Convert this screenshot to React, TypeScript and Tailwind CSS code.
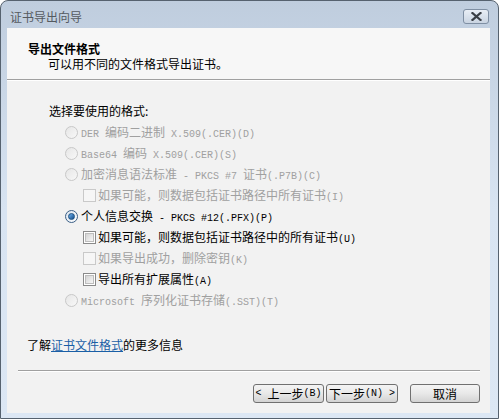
import React from "react";

const Mixed = ({ t }: { t: string }) => (
  <>
    {t.split(/([\x20-\x7e]+)/).map((s, i) =>
      /^[\x20-\x7e]+$/.test(s) ? (
        <span key={i} className="font-['Liberation_Mono',monospace] text-[10px]">
          {s}
        </span>
      ) : (
        <span key={i}>{s}</span>
      )
    )}
  </>
);

const Radio = ({ checked, disabled }: { checked?: boolean; disabled?: boolean }) =>
  disabled ? (
    <span className="w-[13px] h-[13px] rounded-full border border-[#c8c8c8] bg-gradient-to-br from-[#e6e6e6] to-[#f8f8f8] shrink-0" />
  ) : (
    <span className="w-[13px] h-[13px] rounded-full border border-[#3b5f86] bg-gradient-to-br from-[#d9e3ee] to-[#ffffff] shrink-0 flex items-center justify-center">
      {checked && (
        <span className="w-[7px] h-[7px] rounded-full bg-gradient-to-br from-[#6fb3f0] to-[#0f4c8a] border border-[#1b4f80]" />
      )}
    </span>
  );

const Check = ({ disabled }: { disabled?: boolean }) =>
  disabled ? (
    <span className="w-[13px] h-[13px] border border-[#c9c9c9] bg-[#f6f6f6] shrink-0" />
  ) : (
    <span className="w-[13px] h-[13px] border border-[#8a8a8a] bg-white shrink-0 p-[1px]">
      <span className="block w-full h-full bg-gradient-to-br from-[#d4d4d4] to-[#f7f7f7] border border-[#bdbdbd]" />
    </span>
  );

const Btn = ({ children, w }: { children: React.ReactNode; w: string }) => (
  <div
    className={`${w} h-[19px] rounded-[3px] border border-[#707070] bg-gradient-to-b from-[#f4f4f4] via-[#e8e8e8] to-[#d3d3d3] flex items-center justify-center text-[12px] leading-[14px] text-black whitespace-pre`}
  >
    {children}
  </div>
);

export default function App() {
  return (
    <div className="w-[499px] h-[419px] bg-white font-['Noto_Sans_CJK_SC',sans-serif] text-[12px]">
      <div className="h-full flex flex-col rounded-t-[8px] border border-[#56626f] bg-gradient-to-b from-[#bfcdde] via-[#d8e4f2] to-[#dce7f4] overflow-hidden">
        {/* title bar */}
        <div className="h-[27px] shrink-0 flex items-start justify-between pt-[8px] pl-[9px] pr-[9px]">
          <div className="h-[16px] leading-[16px] text-[12px] text-[#555a60]">证书导出向导</div>
          <div className="w-[26px] h-[15px] rounded-[3px] border border-[#7f8fa3] bg-gradient-to-b from-[#e9eef5] to-[#c9d4e2] flex items-center justify-center">
            <svg width="11" height="9" viewBox="0 0 11 9">
              <path d="M1.5 1 L9.5 8 M9.5 1 L1.5 8" stroke="#3a3f46" strokeWidth="2.2" strokeLinecap="square" />
            </svg>
          </div>
        </div>

        {/* client area */}
        <div className="flex-1 ml-[6px] mr-[8px] mb-[5px] flex flex-col bg-[#f2f2f2]">
          {/* header */}
          <div className="h-[51px] shrink-0 bg-[#f7f7f7] pl-[21px] pt-[13px] text-black">
            <div className="h-[15px] leading-[15px] font-bold">导出文件格式</div>
            <div className="h-[15px] leading-[15px] pl-[20px]">可以用不同的文件格式导出证书。</div>
          </div>
          <div className="h-px bg-[#a0a0a0] shrink-0" />
          <div className="h-px bg-white shrink-0" />

          {/* body */}
          <div className="pl-[42px] pt-[22px] text-black">
            <div className="h-[16px] leading-[16px]">选择要使用的格式:</div>
            <div className="mt-[3px] flex flex-col whitespace-pre">
              <div className="h-[21px] flex items-center pl-[16px] gap-[3px] text-[#a0a0a0]">
                <Radio disabled />
                <span><Mixed t="DER 编码二进制 X.509(.CER)(D)" /></span>
              </div>
              <div className="h-[21px] flex items-center pl-[16px] gap-[3px] text-[#a0a0a0]">
                <Radio disabled />
                <span><Mixed t="Base64 编码 X.509(.CER)(S)" /></span>
              </div>
              <div className="h-[21px] flex items-center pl-[16px] gap-[3px] text-[#a0a0a0]">
                <Radio disabled />
                <span><Mixed t="加密消息语法标准 - PKCS #7 证书(.P7B)(C)" /></span>
              </div>
              <div className="h-[21px] flex items-center pl-[34px] gap-[2px] text-[#a0a0a0]">
                <Check disabled />
                <span><Mixed t="如果可能，则数据包括证书路径中所有证书(I)" /></span>
              </div>
              <div className="h-[21px] flex items-center pl-[16px] gap-[3px] text-black">
                <Radio checked />
                <span><Mixed t="个人信息交换 - PKCS #12(.PFX)(P)" /></span>
              </div>
              <div className="h-[21px] flex items-center pl-[34px] gap-[2px] text-black">
                <Check />
                <span><Mixed t="如果可能，则数据包括证书路径中的所有证书(U)" /></span>
              </div>
              <div className="h-[21px] flex items-center pl-[34px] gap-[2px] text-[#a0a0a0]">
                <Check disabled />
                <span><Mixed t="如果导出成功，删除密钥(K)" /></span>
              </div>
              <div className="h-[21px] flex items-center pl-[34px] gap-[2px] text-black">
                <Check />
                <span><Mixed t="导出所有扩展属性(A)" /></span>
              </div>
              <div className="h-[21px] flex items-center pl-[16px] gap-[3px] text-[#a0a0a0]">
                <Radio disabled />
                <span><Mixed t="Microsoft 序列化证书存储(.SST)(T)" /></span>
              </div>
            </div>
          </div>

          {/* link */}
          <div className="mt-[26px] pl-[20px] h-[16px] leading-[16px] text-black">
            了解<span className="text-[#1a5fa6] underline">证书文件格式</span>的更多信息
          </div>

          {/* separator */}
          <div className="mt-[17px] ml-[11px] mr-[10px] h-px bg-[#a0a0a0]" />
          <div className="ml-[11px] mr-[10px] h-px bg-white" />

          {/* buttons */}
          <div className="mt-[12px] mr-[10px] flex justify-end">
            <Btn w="w-[71px]"><Mixed t="< 上一步(B)" /></Btn>
            <div className="w-[2px]" />
            <Btn w="w-[72px]"><Mixed t="下一步(N) >" /></Btn>
            <div className="w-[12px]" />
            <Btn w="w-[70px]">取消</Btn>
          </div>
        </div>
      </div>
    </div>
  );
}
